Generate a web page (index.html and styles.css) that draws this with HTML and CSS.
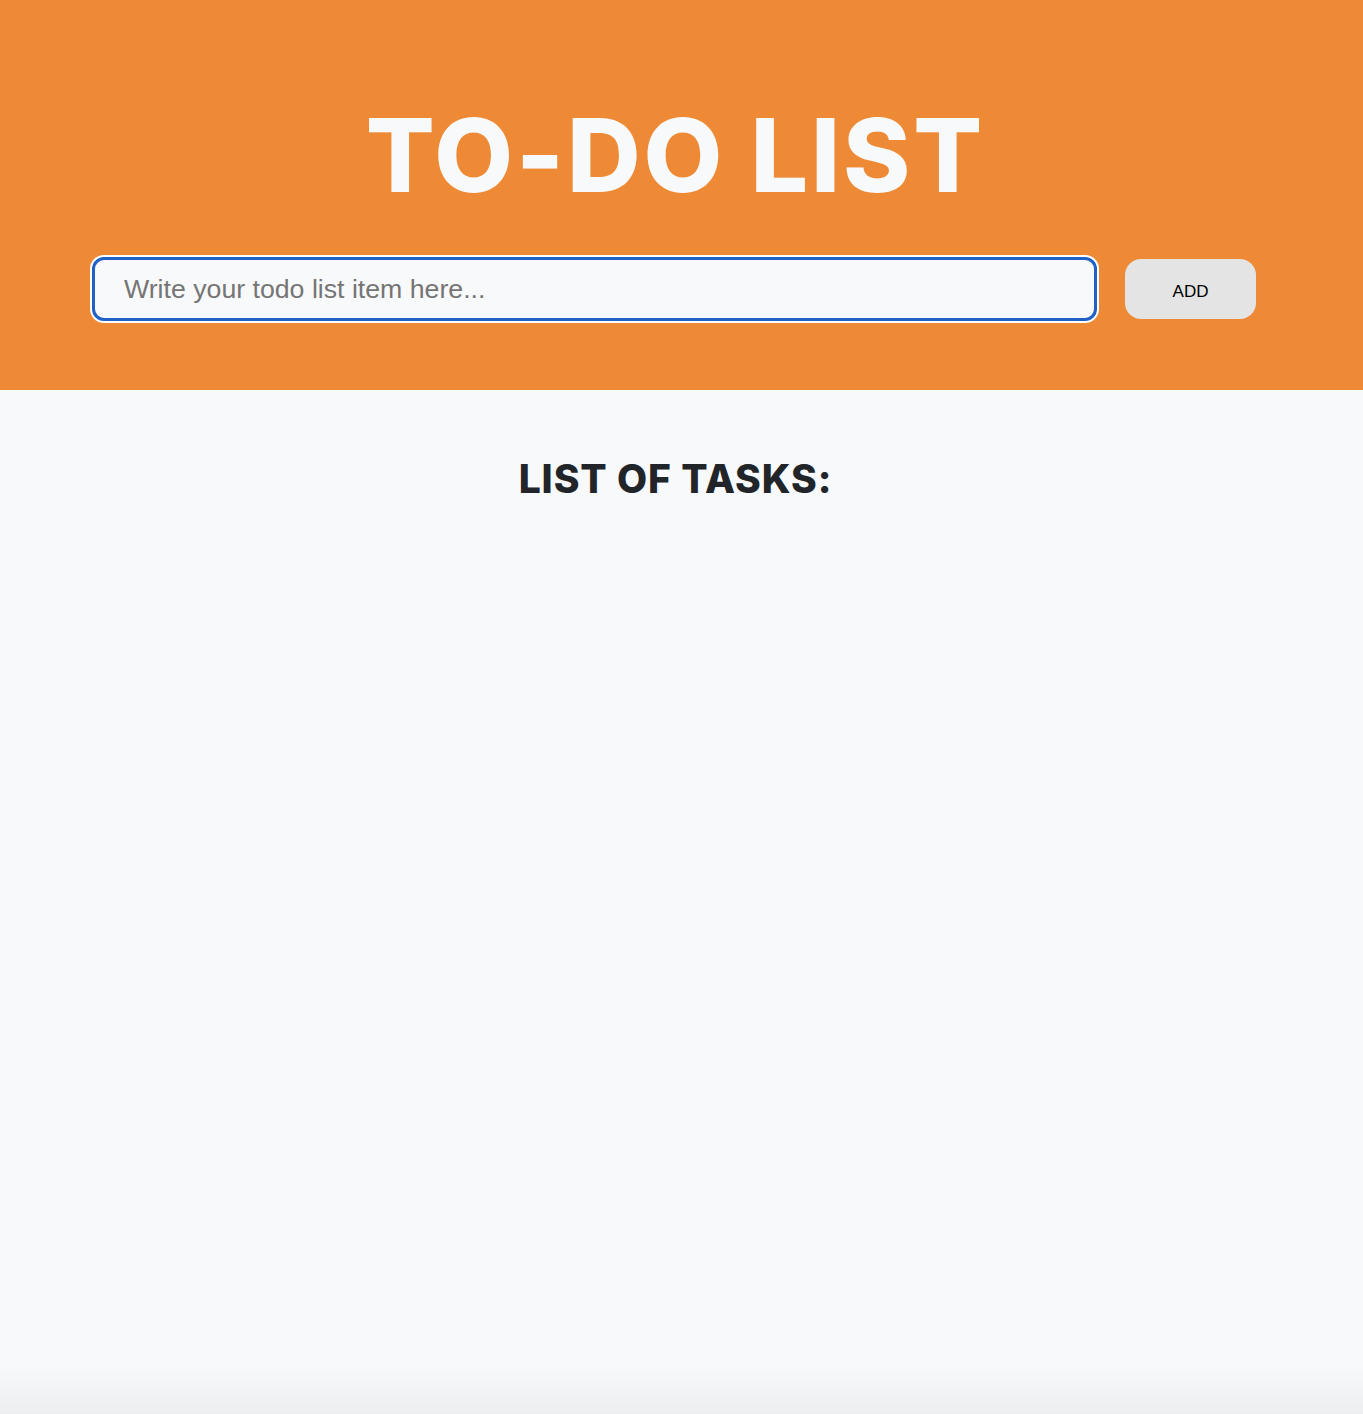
FILE: index.html
```html
<!DOCTYPE html>
<html lang="en">
<head>
<meta charset="utf-8">
<title>To-Do List</title>
<link rel="stylesheet" href="styles.css">
</head>
<body>
<header class="hero">
  <div class="container">
    <h1 class="title">TO-DO LIST</h1>
    <form class="add-form">
      <input class="todo-input" type="text" placeholder="Write your todo list item here...">
      <button class="add-btn" type="button">ADD</button>
    </form>
  </div>
</header>
<main class="tasks">
  <div class="container">
    <h2 class="tasks-title">LIST OF TASKS:</h2>
  </div>
</main>
<div class="bottom-shade"></div>
</body>
</html>
```
FILE: styles.css
```css
* { box-sizing: border-box; }
html, body { margin: 0; padding: 0; }
body {
  background: #f8f9fa;
  font-family: Inter, "Liberation Sans", sans-serif;
  min-height: 1414px;
}
.container {
  padding: 0 107px 0 92px;
}
.hero {
  background: #ee8a35;
  height: 390px;
  padding-top: 98px;
}
.title {
  margin: 0;
  color: #f8f9fa;
  font-family: Inter, sans-serif;
  font-weight: 800;
  font-size: 102px;
  line-height: 114px;
  text-align: center;
  letter-spacing: 2.9px;
  text-indent: 2.9px;
}
.add-form {
  display: flex;
  align-items: center;
  gap: 28px;
  margin-top: 45px;
}
.todo-input {
  flex: 1;
  height: 64px;
  border: 3px solid #2160c4;
  border-radius: 12px;
  box-shadow: 0 0 0 2px #ffffff;
  outline: none;
  background: #f8f9fa;
  padding: 0 29px;
  font-family: "Liberation Sans", Arial, sans-serif;
  font-size: 26.7px;
  color: #212529;
}
.todo-input::placeholder { color: #757575; }
.add-btn {
  width: 131px;
  height: 60px;
  border: none;
  border-radius: 16px;
  background: #e4e4e4;
  font-family: "Liberation Sans", Arial, sans-serif;
  font-size: 17px;
  color: #000;
  padding: 5px 0 0;
}
.tasks-title {
  margin: 67px 0 0;
  text-align: center;
  color: #212529;
  font-family: Inter, sans-serif;
  font-weight: 800;
  font-size: 39px;
  line-height: 44px;
  letter-spacing: 0.9px;
  text-indent: 3px;
}
.bottom-shade {
  position: fixed;
  left: 0; right: 0; bottom: 0;
  height: 50px;
  background: linear-gradient(to bottom, rgba(0,0,0,0), rgba(0,0,0,0.045));
  pointer-events: none;
}
```
